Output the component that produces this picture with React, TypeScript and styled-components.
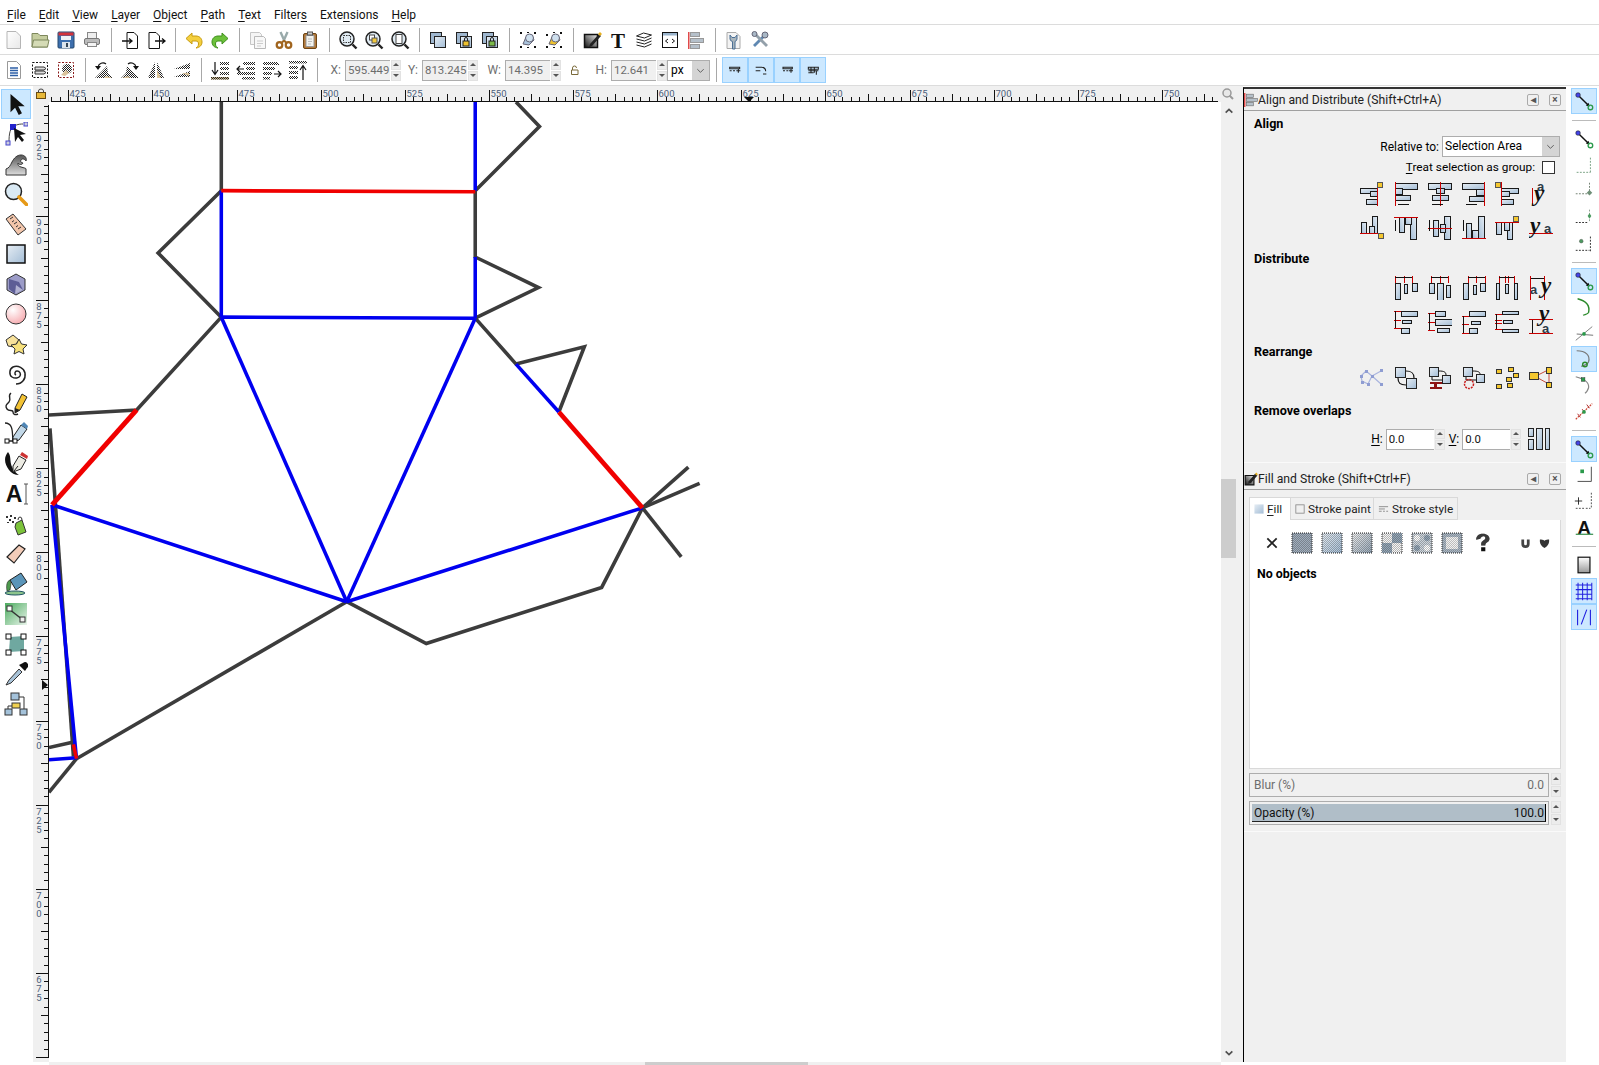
import React from 'react';
import styled, { createGlobalStyle } from 'styled-components';

const GlobalStyle = createGlobalStyle`
	html, body { margin: 0; padding: 0; background: #fff; }
	body { font-family: Roboto, "Open Sans", "Liberation Sans", sans-serif; font-size: 12px; color: #000; }
	u { text-underline-offset: 2px; }
`;

const Page = styled.div`
	width: 1599px;
	height: 1065px;
	overflow: hidden;
	display: flex;
	flex-direction: column;
	background: #fff;
`;

const MenuBar = styled.div`
	display: flex;
	align-items: center;
	gap: 13px;
	padding: 5px 0 0 7px;
	box-sizing: border-box;
	border-bottom: 1px solid #dcdcdc;
	flex: 0 0 25px;
`;

const MenuItem = styled.span`
	font-size: 12px;
	color: #111;
`;

const Toolbar = styled.div<{ $h: number }>`
	display: flex;
	align-items: center;
	flex: 0 0 ${(p) => p.$h}px;
	box-sizing: border-box;
	padding-left: 1px;
	border-bottom: 1px solid #dcdcdc;
`;

const ToolButton = styled.div<{ $active?: boolean }>`
	width: 26px;
	height: 26px;
	display: flex;
	align-items: center;
	justify-content: center;
	box-sizing: border-box;
	flex: 0 0 26px;
	background: ${(p) => (p.$active ? '#cce8ff' : 'transparent')};
	border: 1px solid ${(p) => (p.$active ? '#99d1ff' : 'transparent')};
`;

const VSep = styled.div`
	width: 12px;
	flex: 0 0 12px;
	height: 24px;
	display: flex;
	justify-content: center;
	&::after {
		content: '';
		width: 1px;
		background: #a8a8a8;
	}
`;

const Ico = styled.svg.attrs({ viewBox: '0 0 24 24' })<{ $s?: number }>`
	width: ${(p) => p.$s ?? 24}px;
	height: ${(p) => p.$s ?? 24}px;
	display: block;
	flex: none;
`;

const Defs = styled.svg`
	width: 0;
	height: 0;
	display: block;
	flex: 0 0 0;
`;

const CoordLabel = styled.span<{ $w: number }>`
	width: ${(p) => p.$w}px;
	flex: none;
	text-align: right;
	padding-right: 4px;
	box-sizing: border-box;
	color: #707070;
	font-size: 12px;
`;

const NumInput = styled.div<{ $w: number; $on?: boolean }>`
	width: ${(p) => p.$w}px;
	height: 21px;
	flex: none;
	box-sizing: border-box;
	border: 1px solid #adadad;
	border-width: 1px 0 1px 1px;
	background: ${(p) => (p.$on ? '#fff' : '#f0f0f0')};
	color: ${(p) => (p.$on ? '#111' : '#6d6d6d')};
	font-size: 11.4px;
	line-height: 19px;
	padding-left: 2px;
	overflow: hidden;
`;

const Spin = styled.div`
	width: 10px;
	height: 21px;
	flex: none;
	display: flex;
	flex-direction: column;
	gap: 1px;
	margin: 0 1px;
`;

const SpinPart = styled.div<{ $down?: boolean }>`
	flex: 1;
	background: #ececec;
	border: 1px solid #e2e2e2;
	box-sizing: border-box;
	display: flex;
	align-items: center;
	justify-content: center;
	&::after {
		content: '';
		border-left: 3px solid transparent;
		border-right: 3px solid transparent;
		${(p) => (p.$down ? 'border-top: 3px solid #555;' : 'border-bottom: 3px solid #555;')}
	}
`;

const UnitSelect = styled.div`
	width: 43px;
	height: 21px;
	flex: none;
	box-sizing: border-box;
	border: 1px solid #adadad;
	display: flex;
	font-size: 12px;
	line-height: 19px;
	padding-left: 3px;
	justify-content: space-between;
	margin-left: -1px;
`;

const SelectArrow = styled.div<{ $w: number }>`
	width: ${(p) => p.$w}px;
	background: #d4d4d4;
	display: flex;
	align-items: center;
	justify-content: center;
	flex: none;
`;

const Main = styled.div`
	flex: 1;
	display: flex;
	min-height: 0;
`;

const ToolBox = styled.div`
	width: 33px;
	flex: none;
	padding: 3px 0 0 1px;
	box-sizing: border-box;
	display: flex;
	flex-direction: column;
`;

const ToolSlot = styled.div<{ $active?: boolean }>`
	width: 30px;
	height: 30px;
	flex: none;
	box-sizing: border-box;
	display: flex;
	align-items: center;
	justify-content: center;
	background: ${(p) => (p.$active ? '#cce8ff' : 'transparent')};
	border: 1px solid ${(p) => (p.$active ? '#99d1ff' : 'transparent')};
`;

const CenterColumn = styled.div`
	width: 1210px;
	flex: none;
	display: flex;
	flex-direction: column;
`;

const TopRulerRow = styled.div`
	height: 16px;
	flex: none;
	display: flex;
	background: #f0f0f0;
`;

const RulerSvg = styled.svg`
	display: block;
	flex: none;
	text {
		font-family: Roboto, "Liberation Sans", sans-serif;
		font-size: 9.5px;
		fill: #4d5f7c;
	}
`;

const QuickZoom = styled.div`
	flex: 1;
	display: flex;
	padding-left: 1px;
	align-items: center;
`;

const CanvasRow = styled.div`
	flex: 1;
	display: flex;
	min-height: 0;
	background: #f0f0f0;
`;

const Canvas = styled.div`
	width: 1172px;
	flex: none;
	background: #fff;
	overflow: hidden;
`;

const Drawing = styled.svg`
	width: 1172px;
	height: 960px;
	display: block;
`;

const VScroll = styled.div`
	width: 15px;
	flex: none;
	display: flex;
	flex-direction: column;
`;

const Chevron = styled.div`
	height: 18px;
	flex: none;
	display: flex;
	align-items: center;
	justify-content: center;
`;

const Thumb = styled.div`
	height: 79px;
	flex: none;
	margin-top: 359px;
	margin-bottom: auto;
	background: #cdcdcd;
`;

const HScroll = styled.div`
	height: 3px;
	flex: none;
	margin-left: 49px;
	width: 1172px;
	background: #f0f0f0;
	display: flex;
`;

const HThumb = styled.div`
	width: 163px;
	margin-left: 596px;
	background: #cdcdcd;
`;

const Dock = styled.div`
	width: 323px;
	flex: none;
	box-sizing: border-box;
	background: #f0f0f0;
	border-left: 1px solid #000;
	border-top: 2px solid #333;
	display: flex;
	flex-direction: column;
	margin-top: 1px;
`;

const PanelTitle = styled.div`
	height: 22px;
	flex: none;
	box-sizing: border-box;
	display: flex;
	align-items: center;
	padding: 0 5px 0 0;
	border-bottom: 1px solid #a0a0a0;
	font-size: 12.2px;
	color: #222;
`;

const TitleText = styled.span`
	flex: 1;
`;

const TitleBtn = styled.div`
	width: 12px;
	height: 12px;
	box-sizing: border-box;
	border: 1px solid #aaa;
	border-radius: 2px;
	margin-left: 10px;
	display: flex;
	align-items: center;
	justify-content: center;
	font-size: 10px;
	font-weight: 700;
	line-height: 10px;
	color: #555;
`;

const SectionHead = styled.div<{ $mt?: number }>`
	height: 20px;
	line-height: 20px;
	margin-top: ${(p) => p.$mt ?? 0}px;
	padding-left: 10px;
	font-weight: 700;
	font-size: 12.6px;
	flex: none;
`;

const RightRow = styled.div<{ $h: number; $mt?: number; $pr: number }>`
	height: ${(p) => p.$h}px;
	margin-top: ${(p) => p.$mt ?? 0}px;
	padding-right: ${(p) => p.$pr}px;
	display: flex;
	align-items: center;
	justify-content: flex-end;
	flex: none;
`;

const Select = styled.div`
	width: 118px;
	height: 21px;
	margin-left: 3px;
	box-sizing: border-box;
	border: 1px solid #adadad;
	background: #fff;
	display: flex;
	justify-content: space-between;
	padding-left: 2px;
	line-height: 19px;
`;

const TreatLabel = styled.span`
	font-size: 11.8px;
`;

const CheckBox = styled.div`
	width: 13px;
	height: 13px;
	box-sizing: border-box;
	border: 1px solid #333;
	background: #fff;
	margin-left: 7px;
`;

const IconCell = styled.div`
	width: 33.8px;
	flex: none;
	display: flex;
	justify-content: center;
`;

const SmallLabel = styled.span`
	margin: 0 3px 0 3px;
`;

const PanelEnd = styled.div`
	flex: none;
	margin-top: 12px;
	height: 5px;
	border-top: 1px solid #fafafa;
`;

const Tabs = styled.div`
	display: flex;
	height: 23px;
	flex: none;
	margin: 7px 0 0 5px;
`;

const Tab = styled.div<{ $active?: boolean; $w: number }>`
	width: ${(p) => p.$w}px;
	box-sizing: border-box;
	display: flex;
	align-items: center;
	gap: 3px;
	padding-left: 4px;
	font-size: 11.8px;
	background: ${(p) => (p.$active ? '#fff' : '#f0f0f0')};
	border: 1px solid #d9d9d9;
	border-bottom: ${(p) => (p.$active ? 'none' : '1px solid #d9d9d9')};
	border-left: ${(p) => (p.$active ? '1px solid #d9d9d9' : 'none')};
	color: #222;
`;

const Notebook = styled.div`
	width: 312px;
	height: 249px;
	flex: none;
	margin-left: 5px;
	box-sizing: border-box;
	background: #fff;
	border: 1px solid #d9d9d9;
	border-top: none;
	padding: 12px 0 0 7px;
`;

const PaintRow = styled.div`
	display: flex;
	height: 22px;
	align-items: center;
`;

const PaintCell = styled.div<{ $ml?: number; $w?: number }>`
	width: ${(p) => p.$w ?? 30}px;
	margin-left: ${(p) => p.$ml ?? 0}px;
	display: flex;
	justify-content: center;
`;

const NoObjects = styled.div`
	margin-top: 10px;
	height: 20px;
	line-height: 20px;
	font-weight: 700;
	font-size: 12.4px;
`;

const SliderRow = styled.div<{ $mt: number }>`
	display: flex;
	margin: ${(p) => p.$mt}px 0 0 5px;
	flex: none;
	height: 24px;
`;

const Slider = styled.div<{ $on?: boolean }>`
	width: 300px;
	box-sizing: border-box;
	border: 1px solid #adadad;
	padding: ${(p) => (p.$on ? '2px' : '0 4px')};
	display: flex;
	color: ${(p) => (p.$on ? '#111' : '#6d6d6d')};
`;

const SliderFill = styled.div`
	flex: 1;
	background: #b0bec8;
	border-right: 1px solid #000;
	border-bottom: 1px solid #222;
	display: flex;
	justify-content: space-between;
	align-items: center;
	padding: 0 1px 0 2px;
`;

const SliderPlain = styled.div`
	flex: 1;
	display: flex;
	justify-content: space-between;
	align-items: center;
`;

const SliderSpin = styled(Spin)`
	height: 24px;
	margin-left: 2px;
`;

const DockFill = styled.div`
	flex: 1;
	margin-top: 6px;
	border-top: 1px solid #fafafa;
`;

const SnapBar = styled.div`
	flex: 1;
	display: flex;
	flex-direction: column;
	align-items: center;
	padding: 2px 3px 0 5px;
`;

const SnapSep = styled.div`
	width: 24px;
	height: 12px;
	flex: none;
	display: flex;
	align-items: center;
	&::after {
		content: '';
		width: 100%;
		height: 1px;
		background: #bbb;
	}
`;

const mnemonic = (s: string, i: number) => (
	<>
		{s.slice(0, i)}
		<u>{s[i]}</u>
		{s.slice(i + 1)}
	</>
);

const menus: [string, number][] = [
	['File', 0], ['Edit', 0], ['View', 0], ['Layer', 0], ['Object', 0], ['Path', 0],
	['Text', 0], ['Filters', 6], ['Extensions', 4], ['Help', 0],
];

const dim = 'url(#dt)';

const tb1: (React.ReactNode | null)[] = [
	<><path d="M5 3.500h9l4.500 4.500V20.500H5z" fill="url(#pp)" stroke="#b5b5b5" /></>,
	<><path d="M4 8V5.500h6l2 2h7.500V19H4z" fill="#c5cd9f" stroke="#7d875c" /><path d="M4 19l1.500-7H21l-1.500 7z" fill="#d5dbb6" stroke="#7d875c" /></>,
	<><rect x="4" y="4" width="16" height="16" rx="1" fill="#3d6fae" stroke="#24496f" /><rect x="4.500" y="4.500" width="15" height="3" fill="#d2323a" /><rect x="7" y="8" width="10" height="4" fill="#eef2f6" /><rect x="8" y="14" width="8" height="6" fill="#dce4ec" /><rect x="12" y="15" width="2" height="4" fill="#345" /></>,
	<><rect x="7.500" y="4.500" width="9" height="6" fill="#eee" stroke="#888" /><rect x="4.500" y="10.500" width="15" height="6" rx="1.500" fill="#bbb" stroke="#777" /><rect x="7.500" y="14.500" width="9" height="4" fill="#f4f4f4" stroke="#888" /></>,
	null,
	<><path d="M9 4.500h7l3.500 3.500V20.500H9z" fill="#fff" stroke="#111" /><path d="M4 13h10M11 10.500l3 2.500-3 2.500" fill="none" stroke="#111" strokeWidth="1.300" /></>,
	<><path d="M5 4.500h7l3.500 3.500V20.500H5z" fill="#fff" stroke="#111" /><path d="M11 13h10M18 10.500l3 2.500-3 2.500" fill="none" stroke="#111" strokeWidth="1.300" /></>,
	null,
	<><path d="M10 5L4 10.500 10 16v-3h4c2 0 2.500 1.500 2.500 3 0 2-1 3-2.500 4 4-.5 6-3 6-6 0-4-3-6-6-6h-4z" fill="#f4cf3e" stroke="#c79b10" /></>,
	<><path d="M14 5l6 5.500L14 16v-3h-4c-2 0-2.500 1.500-2.500 3 0 2 1 3 2.500 4-4-.5-6-3-6-6 0-4 3-6 6-6h4z" fill="#6cc13a" stroke="#3f8f1d" /></>,
	null,
	<><path d="M4.500 4.500h9l2 2v10h-11z" fill="#f5f5f5" stroke="#c6c6c6" /><path d="M8.500 8.500h9l2 2v10h-11z" fill="#f8f8f8" stroke="#b9b9b9" /><path d="M11 13h6M11 15.500h6M11 18h4" stroke="#ccc" /></>,
	<><path d="M8.500 4l4 9M15.500 4l-4 9" stroke="#9aa" strokeWidth="2.400" /><circle cx="7.500" cy="17" r="2.800" fill="none" stroke="#a0641d" strokeWidth="2.200" /><circle cx="16.500" cy="17" r="2.800" fill="none" stroke="#a0641d" strokeWidth="2.200" /><path d="M12 12.500l-3 3M12 12.500l3 3" stroke="#a0641d" strokeWidth="1.800" /></>,
	<><rect x="5.500" y="5.500" width="13" height="15" rx="1.500" fill="#b3793a" stroke="#6d4515" /><path d="M8 7.500h8v11H8z" fill="#f3f3ee" stroke="#999" /><rect x="9.500" y="4" width="5" height="3" fill="#ccc" stroke="#555" /><path d="M10 11h4M10 13.500h4M10 16h3" stroke="#bbb" /></>,
	null,
	<><circle cx="11" cy="11" r="7" fill="#dfeaf2" stroke="#222" strokeWidth="1.500" /><rect x="7.500" y="7.500" width="7" height="7" fill="none" stroke="#333" strokeDasharray="1.500 1" /><path d="M16.500 16.500l4 4" stroke="#222" strokeWidth="2.400" /></>,
	<><circle cx="11" cy="11" r="7" fill="#dfeaf2" stroke="#222" strokeWidth="1.500" /><rect x="7.500" y="7" width="5" height="5" fill="#fff" stroke="#444" /><rect x="10" y="10" width="5" height="5" fill="#f1c83c" stroke="#555" /><path d="M16.500 16.500l4 4" stroke="#222" strokeWidth="2.400" /></>,
	<><circle cx="11" cy="11" r="7" fill="#dfeaf2" stroke="#222" strokeWidth="1.500" /><rect x="8" y="6.500" width="6" height="9" fill="#fff" stroke="#444" /><path d="M16.500 16.500l4 4" stroke="#222" strokeWidth="2.400" /></>,
	null,
	<><rect x="4.500" y="4.500" width="11" height="11" fill="#9fb7cf" stroke="#222" /><rect x="8.500" y="8.500" width="11" height="11" fill="url(#gb)" stroke="#222" /></>,
	<><rect x="4.500" y="4.500" width="11" height="11" fill="#9fb7cf" stroke="#222" /><rect x="8.500" y="8.500" width="11" height="11" fill="url(#gb)" stroke="#222" /><rect x="11" y="13" width="6" height="5" fill="#efc22f" stroke="#222" /><path d="M12.500 13v-2a1.500 1.500 0 0 1 3 0v2" fill="none" stroke="#222" /></>,
	<><rect x="4.500" y="4.500" width="11" height="11" fill="#9fb7cf" stroke="#222" /><rect x="8.500" y="8.500" width="11" height="11" fill="url(#gb)" stroke="#222" /><rect x="11" y="13" width="6" height="5" fill="#7cba49" stroke="#222" /><path d="M12.500 13v-2a1.500 1.500 0 0 1 3 0v2" fill="none" stroke="#222" /></>,
	null,
	<><path d="M7 16l3-7 6-2 2 5-5 5z" fill="#a9c3dc" stroke="#667" /><circle cx="13.500" cy="10" r="4" fill="#cfe0ee" stroke="#667" /><path d="M4 4h2v2H4zM18 4h2v2h-2zM4 18h2v2H4zM18 18h2v2h-2zM11 4h2v1h-2zM11 19h2v1h-2z" fill="#111" /></>,
	<><path d="M7 16l3-7 6-2 2 5-5 5z" fill="#efc22f" stroke="#667" /><circle cx="13.500" cy="10" r="4" fill="#cfe0ee" stroke="#667" /><path d="M4 6h2v2H4zM18 4h2v2h-2zM4 18h2v2H4zM18 18h2v2h-2zM11 4h2v1h-2zM11 19h2v1h-2z" fill="#111" /></>,
	null,
	<><path d="M4.500 6.500h13v13h-13z" fill="url(#gk)" stroke="#111" strokeWidth="1.500" /><path d="M10 16l9-10 2 2-9 10-3 1z" fill="#222" /><path d="M18 6l2-2 2 2-2 2z" fill="#e6b020" /></>,
	<><text x="12" y="19.500" textAnchor="middle" fontFamily="Liberation Serif" fontWeight="700" fontSize="21" fill="#111">T</text></>,
	<><path d="M4.500 8l7-3 8 2-7 3z" fill="#fff" stroke="#222" /><path d="M4.500 11l8 2 7-3M4.500 14l8 2 7-3M4.500 17l8 2 7-3" fill="none" stroke="#222" /></>,
	<><rect x="4.500" y="4.500" width="15" height="15" fill="#fff" stroke="#111" /><rect x="5" y="5" width="14" height="2.500" fill="#9ab4cc" /><path d="M10 11l-2.500 2 2.500 2M14 11l2.500 2-2.500 2" fill="none" stroke="#111" /></>,
	<><rect x="4" y="4" width="1.500" height="17" fill="#e04a4a" /><rect x="6.500" y="4.500" width="9" height="4" fill="#b5c0ca" stroke="#999" /><rect x="6.500" y="10.500" width="13" height="4" fill="#b5c0ca" stroke="#999" /><rect x="6.500" y="16.500" width="9" height="4" fill="#b5c0ca" stroke="#999" /></>,
	null,
	<><path d="M5 4.500h9l4 4V20.500H5z" fill="#f3f3f3" stroke="#aaa" /><path d="M8 7v4a3 3 0 0 0 2.500 2.500V21h2.500V13.500A3 3 0 0 0 15 11V7l-2 2.500h-3z" fill="#a9b5bc" stroke="#4b6f95" /></>,
	<><path d="M6 18L16 8" stroke="#5f88b2" strokeWidth="2.800" /><path d="M7 6l12 12" stroke="#93a0aa" strokeWidth="2.800" /><circle cx="17" cy="7" r="3" fill="#a9b8c6" stroke="#667" /><circle cx="6.500" cy="6" r="2.500" fill="#a9b8c6" stroke="#667" /></>,
];

const tb2a: (React.ReactNode | null)[] = [
	<><path d="M5.500 3.500h9l4 4V20.500H5.500z" fill="#fff" stroke="#999" /><path d="M8 10h8M8 12.500h8M8 15h8M8 17.500h8" stroke="#2d5fa6" strokeWidth="1.300" /></>,
	<><rect x="4.500" y="4.500" width="15" height="15" fill="none" stroke="#111" strokeDasharray="2 1.500" /><path d="M7 9h9l2 1.500-2 1.500H7zM7 13h9l2 1.500-2 1.500H7z" fill="#ddd" stroke="#333" /></>,
	<><rect x="4.500" y="4.500" width="15" height="15" fill="none" stroke="#8a1a1a" strokeDasharray="2 1.500" /><circle cx="13" cy="11" r="5" fill={dim} /><path d="M7 17l5-5 3 3-4 3z" fill="#d9c29a" /></>,
	null,
	<><path d="M3 20h18l-5-5-1-7-4 4-3 3z" fill={dim} /><path d="M14 18l6 2h-8z" fill="#d9c29a" /><path d="M6 9a5 5 0 0 1 8-3" fill="none" stroke="#111" strokeWidth="1.200" /><path d="M3 8h6l-3 4z" fill="#111" /></>,
	<><path d="M21 20H3l5-5 1-7 4 4 3 3z" fill={dim} /><path d="M10 18l-6 2h8z" fill="#d9c29a" /><path d="M18 9a5 5 0 0 0-8-3" fill="none" stroke="#111" strokeWidth="1.200" /><path d="M21 8h-6l3 4z" fill="#111" /></>,
	<><path d="M11 4v16H4z" fill={dim} /><path d="M13 4v16h7z" fill={dim} /><path d="M13 12v8h4z" fill="#d9c29a" /></>,
	<><path d="M20 5v6H4z" fill={dim} /><path d="M20 13v6H4z" fill={dim} /><path d="M12 15l7 3v-3z" fill="#d9c29a" /></>,
	null,
	<><path d="M7 4v12M4 12l3 4.500L10 12" fill="none" stroke="#111" strokeWidth="1.200" /><path d="M12 4h9v3h-9zM12 9h9v3h-9zM12 14h9v3h-9z" fill={dim} /><path d="M3 19h18v2.500H3z" fill="#c9b58a" /><path d="M3 19h18v2.500H3z" fill={dim} /></>,
	<><path d="M3 11h7M6 8l-3 3 3 3" fill="none" stroke="#111" strokeWidth="1.200" /><path d="M9 4h12v3H9zM12 9h9v3h-9zM3 14h18v3H3zM8 19h13v2.500H8z" fill={dim} /></>,
	<><path d="M3 4h14l3 3H3zM3 9h12v3H3zM3 14h9v3H3zM3 19h7v2.500H3z" fill={dim} /><path d="M14 16h7M18 13l3 3-3 3" fill="none" stroke="#111" strokeWidth="1.200" /></>,
	<><path d="M17 8v14M14 12l3-4.500 3 4.500" fill="none" stroke="#111" strokeWidth="1.200" /><path d="M3 3h18v2.500H3zM3 8h9v3H3zM3 13h9v3H3zM3 18h9v3H3z" fill={dim} /></>,
];

const toggles = [
	'M4 8h15v2H4zM4 13h3M9 13h3M14 13h6M17 10v6',
	'M4 8h9c4 0 6 2 6 6M4 13h7M15 18h5',
	'M6 8h14v2H6zM6 13h3M11 13h3M15 13h6M18 10v6',
	'M5 8h15v3H5zM5 13h15M5 16h8M9 8v8M14 8v8M17 13v6',
];

const tools: React.ReactNode[] = [
	<><path d="M6 1v20l5-5 4 8 3.500-2-4-7.500h7z" fill="#111" /></>,
	<><path d="M5 20C5 12 6 6 10 4s7-2 9-2" fill="none" stroke="#444" /><rect x="6" y="2" width="6" height="6" fill="#2222cc" /><rect x="20" y="0" width="4" height="4" fill="#ccd" stroke="#44c" /><rect x="2" y="19" width="4" height="4" fill="#ccd" stroke="#44c" /><path d="M10 6l1 14 3-5 4 5 2-2-4-5 6-1z" fill="#111" /></>,
	<><path d="M2 23v-6c3-1 4-3 6-7s5-7 9-7c4 0 6 3 5 6-1-2-4-3-5-1-1 1 0 3 2 3-1 2-4 2-5 0 0 2 0 3 3 4s5 1 5 2v6z" fill="url(#gg)" stroke="#333" /></>,
	<><circle cx="9.500" cy="9.500" r="8" fill="#d9e9f4" stroke="#222" strokeWidth="1.500" /><path d="M15 15l7.500 7.500" stroke="#e69a18" strokeWidth="3.600" strokeLinecap="round" /></>,
	<><path d="M2 7l7-5 13 15-8 6z" fill="#f3c6ab" stroke="#333" /><path d="M6 7l3-2M8 10l2-1.500M10 12l3-2M12 15l2-1.500M14 17l3-2" stroke="#333" /></>,
	<><rect x="3" y="3" width="18" height="18" fill="url(#gb)" stroke="#111" strokeWidth="1.500" /></>,
	<><path d="M12 2l9 5v11l-9 5-9-5V7z" fill="#9c9cc8" stroke="#333" /><path d="M5 7l10 3 4 8-8 4-6-5z" fill="#5d5d96" /><path d="M12 13l7 5-8 4z" fill="#b3b3d3" /></>,
	<><circle cx="12" cy="12" r="10" fill="url(#gp)" stroke="#333" /></>,
	<><path d="M2 8l7-5 6 5-5 7-6-1z" fill="#f7e19a" stroke="#333" /><path d="M15 7l2.500 5 5.500 1-4 4 1 5-5-2.500L10 22l1-5-4-4 5.500-1z" fill="#f7e17c" stroke="#333" /></>,
	<><path d="M12 13c-2-1-1-4 1-4 3 0 4 3 3 5s-5 3-8 1-3-8 1-10c5-2 11 1 12 6 1 6-3 11-9 11" fill="none" stroke="#222" strokeWidth="1.500" /></>,
	<><path d="M7 1C3 4 8 7 5 10s-4 4-2 7c2 3 6 0 6 3s3 3 5 2" fill="none" stroke="#222" strokeWidth="1.400" /><path d="M11 16L18 2l5 3-7 13-5 3z" fill="#f2c233" stroke="#222" /><path d="M11 16l5 2-5 3z" fill="#222" /></>,
	<><path d="M1 1c9 0 7 11 8 18H3" fill="none" stroke="#222" strokeWidth="1.300" /><path d="M9 15L17 3l6 4-8 11-6 2z" fill="#c2d8e8" stroke="#222" /><path d="M17 3l6 4 1-3-4-4z" fill="#4f86b6" /><rect x="1" y="17" width="4" height="4" fill="#fff" stroke="#111" /><rect x="9" y="17" width="4" height="4" fill="#fff" stroke="#111" /></>,
	<><path d="M4 0C-1 6 1 13 5 18c2 3 6 5 10 5-3-2-7-6-8-11S7 4 4 0z" fill="#111" /><path d="M9 14L15 4l7 4-5 9-8 3z" fill="#ecebe3" stroke="#222" /><path d="M16 3l7 4 1-3-6-4z" fill="#c33" /><path d="M10 19l4-5" stroke="#222" /></>,
	<><text x="10" y="20" textAnchor="middle" fontFamily="Liberation Sans" fontWeight="700" fontSize="23" fill="#111">A</text><path d="M22 2v20M20 2h4M20 22h4" stroke="#555" /></>,
	<><path d="M12 11l6-3 4 12-8 3-3-8z" fill="#7cc33a" stroke="#333" /><path d="M14 8a2 3 0 0 1 4 0" fill="none" stroke="#333" /><path d="M2 4h2v2H2zM6 3h2v2H6zM10 5h2v2h-2zM5 7h2v2H5zM8 9h2v2H8zM3 10h2v1H3z" fill="#333" /></>,
	<><path d="M3 15L15 3l6 4-11 14z" fill="#f4cdb9" stroke="#222" strokeWidth="1.200" /></>,
	<><ellipse cx="11" cy="21" rx="10" ry="2" fill="#8cc48c" stroke="#256" /><path d="M6 8l11-7 6 9-11 8z" fill="#5b95b9" stroke="#222" /><path d="M6 8c-3 1-4 5-3 11l3-1 1-6z" fill="#4d9a4d" stroke="#222" strokeWidth=".6" /></>,
	<><rect x="1" y="1" width="22" height="22" fill="url(#gm)" /><path d="M5 7l14 11" stroke="#333" strokeWidth="1.500" /><rect x="3" y="4" width="5" height="5" fill="#fff" stroke="#333" /><rect x="16" y="15" width="5" height="5" fill="#eee" stroke="#333" /></>,
	<><path d="M6 5l14-1 0 15-15 1z" fill="#6fa8a0" /><rect x="2" y="2" width="5" height="5" fill="#fff" stroke="#111" /><rect x="17" y="2" width="5" height="5" fill="#fff" stroke="#111" /><rect x="2" y="18" width="5" height="5" fill="#fff" stroke="#111" /><rect x="17" y="18" width="5" height="5" fill="#fff" stroke="#111" /></>,
	<><path d="M15 7L5 18l-3 5 5-2L18 10z" fill="#a9c3d8" stroke="#333" /><path d="M15 3l6 6 2-3a3 3 0 0 0-4-5z" fill="#111" /></>,
	<><rect x="7" y="1" width="8" height="7" fill="#a4c2da" stroke="#333" /><rect x="8" y="11" width="8" height="5" fill="#f0d050" stroke="#333" /><rect x="1" y="17" width="7" height="6" fill="#a4c2da" stroke="#333" /><rect x="16" y="17" width="7" height="6" fill="#a4c2da" stroke="#333" /><path d="M15 5h5v12M4 17v-3h4" fill="none" stroke="#333" /></>,
];

type Bar = [number, number, number, number];

interface AlignDef {
	bars: Bar[];
	reds: number[];
	yellow?: [number, number];
	arrow?: boolean;
	tf?: string;
	top?: number;
}

const BarIcon = ({ d }: { d: AlignDef }) => (
	<Ico shapeRendering="crispEdges">
		<g transform={d.tf}>
			{d.bars.map((b, i) => (
				<rect key={i} x={b[0] + 0.5} y={b[1] + 0.5} width={b[2]} height={b[3]} fill="url(#gb)" stroke="#1a1a1a" />
			))}
			{d.reds.map((x, i) => (
				<rect key={i} x={x} y={d.top ?? 0} width="1" height={d.top !== undefined ? 7 : 24} fill="#c80000" />
			))}
			{d.top !== undefined && <rect x={d.reds[0]} y={1} width={d.reds[d.reds.length - 1] - d.reds[0]} height="1" fill="#111" />}
			{d.yellow && <rect x={d.yellow[0] + 0.5} y={d.yellow[1] + 0.5} width="5" height="5" fill="#f4c72f" stroke="#555" />}
			{d.arrow && <rect x="4" y="22" width="11" height="1" fill="#111" />}
		</g>
	</Ico>
);

const rot = 'rotate(90 12 12)';
const swap = 'matrix(0 1 1 0 0 0)';

const Letter = ({ k, x, y }: { k: 'a' | 'y'; x: number; y: number }) =>
	k === 'a' ? (
		<text x={x} y={y} fontFamily="Liberation Sans" fontWeight="700" fontSize="13" fill="#2d3b48">a</text>
	) : (
		<text x={x} y={y} fontFamily="Liberation Serif" fontWeight="700" fontStyle="italic" fontSize="23" fill="#111">y</text>
	);

const glyphLayouts = {
	alignV: (
		<>
			<rect x="3" y="6" width="1" height="18" fill="#c80000" />
			<Letter k="a" x={8} y={9} />
			<Letter k="y" x={5} y={19} />
		</>
	),
	alignH: (
		<>
			<rect x="0" y="17" width="24" height="1" fill="#c80000" />
			<Letter k="y" x={1} y={17} />
			<Letter k="a" x={15} y={17} />
		</>
	),
	distV: (
		<>
			<rect x="1" y="0" width="1" height="24" fill="#c80000" />
			<rect x="15" y="0" width="1" height="24" fill="#c80000" />
			<rect x="2" y="2" width="13" height="1" fill="#111" />
			<Letter k="a" x={1} y={18} />
			<Letter k="y" x={12} y={17} />
		</>
	),
	distH: (
		<>
			<rect x="0" y="9" width="24" height="1" fill="#c80000" />
			<rect x="0" y="23" width="24" height="1" fill="#c80000" />
			<rect x="3" y="10" width="1" height="13" fill="#111" />
			<Letter k="y" x={10} y={11} />
			<Letter k="a" x={13} y={23} />
		</>
	),
};

const alignRow1: AlignDef[] = [
	{ bars: [[0, 6, 17, 5], [10, 9, 7, 5], [6, 17, 11, 5]], reds: [17], yellow: [17, 0] },
	{ bars: [[1, 1, 22, 6], [1, 6, 7, 6], [1, 13, 15, 5]], reds: [1], arrow: true },
	{ bars: [[0, 1, 23, 6], [8, 6, 8, 5], [4, 13, 16, 5]], reds: [12], arrow: true },
	{ bars: [[0, 1, 22, 6], [14, 7, 8, 6], [7, 14, 15, 5]], reds: [22], arrow: true },
	{ bars: [[6, 6, 17, 5], [6, 9, 8, 5], [6, 17, 12, 5]], reds: [6], yellow: [0, 0] },
];

const distRow: AlignDef[] = [
	{ bars: [[1, 7, 5, 16], [10, 8, 3, 9], [18, 7, 5, 8]], reds: [1, 10, 18], top: 0 },
	{ bars: [[1, 7, 5, 10], [9, 7, 6, 17], [18, 9, 4, 12]], reds: [3, 12, 20], top: 0 },
	{ bars: [[1, 7, 5, 16], [11, 9, 3, 9], [18, 7, 5, 8]], reds: [6, 14, 23], top: 0 },
	{ bars: [[1, 7, 3, 16], [10, 8, 3, 9], [19, 7, 3, 16]], reds: [4, 10, 13, 19], top: 0 },
];

const rearrange: React.ReactNode[] = [
	<><path d="M1 10l5-5 6 5-4 8-6-3zM12 10l9-5M12 10l9 8" fill="none" stroke="#a9b4de" strokeWidth="1.200" /><path d="M0 9h3v3H0zM5 4h3v3H5zM11 9h3v3h-3zM7 17h3v3H7zM1 15h3v3H1zM20 3h3v3h-3zM20 17h3v3h-3z" fill="#8f9dd2" /></>,
	<><rect x="1.500" y="1.500" width="10" height="10" fill="url(#gb)" stroke="#222" /><rect x="12.500" y="12.500" width="10" height="10" fill="url(#gb)" stroke="#222" /><path d="M12 5c6 0 8 2 8 7M12 19c-6 0-8-2-8-7" fill="none" stroke="#111" strokeWidth="1.200" /></>,
	<><rect x="1.500" y="1.500" width="9" height="9" fill="url(#gb)" stroke="#222" /><rect x="14.500" y="9.500" width="8" height="8" fill="url(#gb)" stroke="#222" /><path d="M11 5c5 0 7 1 7 4M4 11v3h10" fill="none" stroke="#111" /><path d="M2 16h12v2H2zM2 21h12v2H2zM6 18h3v3H6z" fill="#8d1212" /></>,
	<><rect x="1.500" y="1.500" width="9" height="9" fill="url(#gb)" stroke="#222" /><rect x="14.500" y="8.500" width="8" height="8" fill="url(#gb)" stroke="#222" /><path d="M11 5c5 0 7 1 7 3M4 11v3h10" fill="none" stroke="#111" /><circle cx="7" cy="18" r="4.500" fill="none" stroke="#c81c1c" strokeWidth="1.500" strokeDasharray="2 1" /></>,
	<><g fill="#f4c72f" stroke="#333"><rect x="1.500" y="3.500" width="5" height="4" /><rect x="13.500" y="1.500" width="5" height="4" /><rect x="18.500" y="7.500" width="5" height="4" /><rect x="11.500" y="11.500" width="5" height="4" /><rect x="1.500" y="18.500" width="5" height="4" /><rect x="12.500" y="17.500" width="5" height="4" /></g></>,
	<><path d="M9 9l10-5M9 12l9 5M20 8v8" stroke="#c84a3a" /><rect x="0.500" y="6.500" width="9" height="7" fill="#f4c72f" stroke="#333" /><rect x="17.500" y="1.500" width="5" height="6" fill="#f4c72f" stroke="#333" /><rect x="17.500" y="16.500" width="5" height="5" fill="#f4c72f" stroke="#333" /></>,
];

const swatch = { x: 2, y: 2, width: 20, height: 20 };

const paints: React.ReactNode[] = [
	<><rect {...swatch} fill="#9fadbc" stroke="#222" strokeDasharray="1 1" /><rect {...swatch} fill={dim} opacity="0.3" /></>,
	<><rect {...swatch} fill="url(#gb)" stroke="#222" strokeDasharray="1 1" /><rect {...swatch} fill={dim} opacity="0.3" /></>,
	<><rect {...swatch} fill="url(#gl)" stroke="#222" strokeDasharray="1 1" /><rect {...swatch} fill={dim} opacity="0.3" /></>,
	<><rect {...swatch} fill="#f4f4f4" stroke="#222" strokeDasharray="1 1" /><path d="M12 2h10v10H12zM2 12h10v10H2z" fill="#93a5b6" /><rect {...swatch} fill={dim} opacity="0.3" /></>,
	<><rect {...swatch} fill="#ccd4dc" stroke="#222" strokeDasharray="1 1" /><circle cx="7" cy="7" r="3" fill="#fff" /><circle cx="17" cy="7" r="3" fill="#93a5b6" /><circle cx="7" cy="17" r="3" fill="#93a5b6" /><circle cx="17" cy="17" r="3" fill="#fff" /><rect {...swatch} fill={dim} opacity="0.3" /></>,
	<><rect {...swatch} fill="#a9b6c3" stroke="#222" strokeDasharray="1 1" /><rect x="6" y="6" width="12" height="12" fill="#f0f0f0" /><rect {...swatch} fill={dim} opacity="0.25" /></>,
];

const connector = (
	<>
		<path d="M7 7l10 10" stroke="#111" strokeWidth="1.600" />
		<path d="M18 18l-4-1 3-3z" fill="#111" />
		<circle cx="5.500" cy="5.500" r="2.500" fill="#4444e8" stroke="#111" strokeWidth=".6" />
		<circle cx="19" cy="19" r="2.500" fill="none" stroke="#2b9a4b" strokeWidth="1.500" />
	</>
);

const snaps: (React.ReactNode | null | { on: React.ReactNode })[] = [
	{ on: connector },
	null,
	connector,
	<><path d="M4 20h15M19 20V4" fill="none" stroke="#6f9a7a" strokeDasharray="2 1.500" /></>,
	<><path d="M3 15h14M18 3v13" fill="none" stroke="#6a7a6a" strokeDasharray="2 1.500" /><path d="M18 11l3 3-3 3-3-3z" fill="#6f8f77" /></>,
	<><path d="M3 18h14" stroke="#222" strokeDasharray="2 1.500" /><path d="M18 4v14" stroke="#8a9a8a" strokeDasharray="2 1.500" /><path d="M18 8l2 3-2 3-2-3z" fill="#4b9a5f" /></>,
	<><path d="M3 20h15M19 5v16" fill="none" stroke="#222" strokeDasharray="2 1.500" /><circle cx="9" cy="10" r="2" fill="#4b9a5f" stroke="#555" strokeWidth=".5" /></>,
	null,
	{ on: connector },
	<><path d="M5 3c8 2 14 6 12 15-1 2-4 2-6 3" fill="none" stroke="#2b8a2b" strokeWidth="1.500" /></>,
	<><path d="M3 20L21 5" stroke="#777" /><path d="M4 11l17 6" stroke="#777" transform="rotate(-15 12 12)" /><circle cx="12" cy="13" r="2" fill="#2b9a4b" /></>,
	{ on: <><path d="M4 3c10 0 15 5 13 12-1 3-4 4-8 5" fill="none" stroke="#777" strokeWidth="1.300" /><circle cx="13" cy="18" r="2.500" fill="none" stroke="#2b8a2b" strokeWidth="1.500" /></> },
	<><path d="M3 3c8 2 15 5 14 12-1 3-2 5-4 6" fill="none" stroke="#888" strokeWidth="1.300" /><rect x="9" y="4" width="4" height="4" fill="#2b9a4b" stroke="#333" strokeWidth=".5" /></>,
	<><path d="M3 21L21 4" stroke="#c43" strokeWidth="1.300" strokeDasharray="2 1" /><path d="M5 15l3 4M10 10l3 4M15 5l3 4" stroke="#a22" /><circle cx="12" cy="13" r="2" fill="#2b9a4b" /></>,
	null,
	{ on: connector },
	<><path d="M5 19h15M20 3v16" fill="none" stroke="#444" /><rect x="8" y="6" width="4" height="4" fill="#2b9a4b" /></>,
	<><path d="M6 8v8M2 12h8" stroke="#222" /><path d="M14 20h5M20 3v17" fill="none" stroke="#444" strokeDasharray="2 1.500" /><path d="M3 20h9" stroke="#444" strokeDasharray="2 1.500" /></>,
	<><text x="12" y="20" textAnchor="middle" fontFamily="Liberation Sans" fontWeight="700" fontSize="20" fill="#111">A</text><path d="M3 20h19" stroke="#4b9a5f" strokeWidth="1.500" /></>,
	null,
	<><rect x="5.500" y="3.500" width="13" height="17" fill="url(#gk2)" stroke="#111" strokeWidth="1.300" /></>,
	{ on: <path d="M3 5.500h18M3 10.500h18M3 15.500h18M3 20.500h18M5.500 3v19M10.500 3v19M15.500 3v19M20.500 3v19" stroke="#2020e0" strokeWidth="1.100" fill="none" /> },
	{ on: <path d="M5 4v17M19 4v17M9 20l6-16" stroke="#2020e0" strokeWidth="1.200" fill="none" /> },
];

const TopRuler = () => {
	const ticks: React.ReactNode[] = [];
	const labels: React.ReactNode[] = [];
	for (let i = -2; i < 140; i++) {
		const x = Math.round(35.3 + 8.413 * i) + 0.5;
		const len = i % 10 === 0 ? 11 : i % 5 === 0 ? 7 : 4;
		if (x < 18 || x > 1185) continue;
		ticks.push(<path key={i} d={`M${x} 15V${15 - len}`} stroke="#111" />);
		if (i % 10 === 0) {
			labels.push(<text key={i} x={x + 1} y={11}>{425 + (i / 10) * 25}</text>);
		}
	}
	return (
		<RulerSvg width="1188" height="16">
			<path d="M18 15.500H1185" stroke="#111" />
			{ticks}
			{labels}
			<g transform="translate(3 3)">
				<rect x="0.500" y="3.500" width="9" height="6" fill="#e8b838" stroke="#6a4c10" />
				<path d="M2.500 3.500V2a2.500 2 0 0 1 5 0v1.500" fill="none" stroke="#444" />
			</g>
			<path d="M711 11h10l-5 5z" fill="#111" />
		</RulerSvg>
	);
};

const SideRuler = () => {
	const items: React.ReactNode[] = [];
	for (let i = -3; i < 114; i++) {
		const y = Math.round(29.7 + 8.413 * i) + 0.5;
		if (y < 3) continue;
		const len = i % 10 === 0 ? 12 : i % 5 === 0 ? 7 : 4;
		items.push(<path key={i} d={`M15 ${y}H${15 - len}`} stroke="#111" />);
		if (i % 10 === 0 && i <= 100) {
			const v = String(925 - (i / 10) * 25);
			items.push(
				<text key={`l${i}`} x="6" y={y + 9} textAnchor="middle">
					{v.split('').map((c, k) => (
						<tspan key={k} x="6" dy={k ? 9 : 0}>{c}</tspan>
					))}
				</text>,
			);
		}
	}
	return (
		<RulerSvg width="16" height="960">
			<path d="M15.500 3V956" stroke="#111" />
			{items}
			<path d="M9 578l6 5-6 5z" fill="#111" />
		</RulerSvg>
	);
};

const seg = (pts: number[][]) => pts.map((p) => p.join(',')).join(' ');

const darkLines = [
	[[217, 100], [217, 187]],
	[[506, 100], [529, 124], [466, 187]],
	[[217, 187], [155, 248], [217, 311]],
	[[466, 187], [466, 252], [528, 282], [466, 312]],
	[[217, 311], [134, 402], [48, 407]],
	[[466, 312], [506, 357], [573, 340], [548, 404]],
	[[630, 498], [675, 458]],
	[[630, 498], [686, 474]],
	[[630, 498], [668, 546]],
	[[630, 498], [590, 576], [418, 631], [340, 590]],
	[[340, 590], [75, 744]],
	[[49, 420], [72, 742]],
	[[75, 744], [48, 777]],
	[[48, 733], [70, 728]],
];

const blueLines = [
	[[466, 100], [466, 187]],
	[[217, 187], [217, 311]],
	[[466, 252], [466, 312]],
	[[217, 311], [466, 312]],
	[[217, 311], [340, 590]],
	[[466, 312], [340, 590]],
	[[51, 495], [340, 590]],
	[[340, 590], [630, 498]],
	[[506, 357], [548, 404]],
	[[51, 495], [75, 744]],
	[[48, 745], [75, 743]],
];

const redLines: [number[][], number][] = [
	[[[217, 187], [466, 188]], 3.600],
	[[[134, 402], [51, 495]], 4.800],
	[[[548, 404], [630, 498]], 4.600],
	[[[72, 730], [75, 744]], 3.400],
];

const chevronDown = <Ico $s={11}><path d="M5 9l7 7 7-7" fill="none" stroke="#555" strokeWidth="2" /></Ico>;

const App = () => (
	<Page>
		<GlobalStyle />
		<Defs>
			<defs>
				<linearGradient id="gb" x1="0" y1="0" x2="1" y2="1"><stop offset="0" stopColor="#e6edf4" /><stop offset="1" stopColor="#a3bdd6" /></linearGradient>
				<linearGradient id="pp" x1="0" y1="0" x2="1" y2="1"><stop offset="0" stopColor="#fff" /><stop offset="1" stopColor="#e8e8e8" /></linearGradient>
				<linearGradient id="gg" x1="0" y1="0" x2="0" y2="1"><stop offset="0" stopColor="#555" /><stop offset="1" stopColor="#ddd" /></linearGradient>
				<linearGradient id="gk" x1="0" y1="1" x2="1" y2="0"><stop offset="0" stopColor="#111" /><stop offset="1" stopColor="#eee" /></linearGradient>
				<linearGradient id="gk2" x1="0" y1="0" x2="0" y2="1"><stop offset="0" stopColor="#fff" /><stop offset="1" stopColor="#999" /></linearGradient>
				<linearGradient id="gl" x1="0" y1="0" x2="1" y2="1"><stop offset="0" stopColor="#f2f2f2" /><stop offset="1" stopColor="#93a5b6" /></linearGradient>
				<linearGradient id="gm" x1="0" y1="0" x2="1" y2="1"><stop offset="0" stopColor="#4cab5f" /><stop offset="1" stopColor="#eaf5ec" /></linearGradient>
				<radialGradient id="gp" cx=".35" cy=".3" r=".9"><stop offset="0" stopColor="#fff" /><stop offset="1" stopColor="#f59aa0" /></radialGradient>
				<pattern id="dt" width="2" height="2" patternUnits="userSpaceOnUse"><rect width="1" height="1" fill="#222" /><rect x="1" y="1" width="1" height="1" fill="#222" /></pattern>
			</defs>
		</Defs>
		<MenuBar>
			{menus.map(([m, i]) => (
				<MenuItem key={m}>{mnemonic(m, i)}</MenuItem>
			))}
		</MenuBar>
		<Toolbar $h={30}>
			{tb1.map((n, i) => (n ? <ToolButton key={i}><Ico>{n}</Ico></ToolButton> : <VSep key={i} />))}
		</Toolbar>
		<Toolbar $h={31}>
			{tb2a.map((n, i) => (n ? <ToolButton key={i}><Ico>{n}</Ico></ToolButton> : <VSep key={i} />))}
			<VSep />
			<CoordLabel $w={22}>X:</CoordLabel>
			<NumInput $w={45}>595.449</NumInput>
			<Spin><SpinPart /><SpinPart $down /></Spin>
			<CoordLabel $w={20}>Y:</CoordLabel>
			<NumInput $w={45}>813.245</NumInput>
			<Spin><SpinPart /><SpinPart $down /></Spin>
			<CoordLabel $w={26}>W:</CoordLabel>
			<NumInput $w={45}>14.395</NumInput>
			<Spin><SpinPart /><SpinPart $down /></Spin>
			<ToolButton>
				<Ico $s={12}><path d="M7 12V8a4 4 0 0 1 8 0M5 12h13v9H5z" fill="none" stroke="#7a6a3a" strokeWidth="2" /></Ico>
			</ToolButton>
			<CoordLabel $w={23}>H:</CoordLabel>
			<NumInput $w={45}>12.641</NumInput>
			<Spin><SpinPart /><SpinPart $down /></Spin>
			<UnitSelect>
				px
				<SelectArrow $w={17}>{chevronDown}</SelectArrow>
			</UnitSelect>
			<VSep />
			{toggles.map((d) => (
				<ToolButton key={d} $active><Ico $s={16}><path d={d} fill="none" stroke="#222" strokeWidth="1.600" /></Ico></ToolButton>
			))}
		</Toolbar>
		<Main>
			<ToolBox>
				{tools.map((n, i) => (
					<ToolSlot key={i} $active={i === 0}><Ico $s={i === 0 ? 22 : 24}>{n}</Ico></ToolSlot>
				))}
			</ToolBox>
			<CenterColumn>
				<TopRulerRow>
					<TopRuler />
					<QuickZoom>
						<Ico $s={12}><circle cx="10" cy="10" r="8" fill="#e8e8e8" stroke="#999" strokeWidth="3" /><path d="M15 15l7 7" stroke="#999" strokeWidth="4" /></Ico>
					</QuickZoom>
				</TopRulerRow>
				<CanvasRow>
					<SideRuler />
					<Canvas>
						<Drawing viewBox="0 0 1172 960">
							<g transform="translate(-49 -102) scale(1.0198)" fill="none" strokeLinejoin="miter">
								{darkLines.map((l, i) => (
									<polyline key={i} points={seg(l)} stroke="#3c3c3c" strokeWidth="3.500" />
								))}
								{blueLines.map((l, i) => (
									<polyline key={i} points={seg(l)} stroke="#0000f0" strokeWidth="3.500" />
								))}
								{redLines.map(([l, w], i) => (
									<polyline key={i} points={seg(l)} stroke="#f00000" strokeWidth={w} />
								))}
							</g>
						</Drawing>
					</Canvas>
					<VScroll>
						<Chevron><Ico $s={10}><path d="M4 16l8-8 8 8" fill="none" stroke="#505050" strokeWidth="4" /></Ico></Chevron>
						<Thumb />
						<Chevron><Ico $s={10}><path d="M4 8l8 8 8-8" fill="none" stroke="#505050" strokeWidth="4" /></Ico></Chevron>
					</VScroll>
				</CanvasRow>
			</CenterColumn>
			<Dock>
				<PanelTitle>
					<Ico $s={14}><rect x="0" y="0" width="2.500" height="24" fill="#e04a4a" /><rect x="4" y="2" width="12" height="6" fill="#b5c0ca" stroke="#666" /><rect x="4" y="9.500" width="19" height="5" fill="#b5c0ca" stroke="#666" /><rect x="4" y="16" width="12" height="6" fill="#b5c0ca" stroke="#666" /></Ico>
					<TitleText>Align and Distribute (Shift+Ctrl+A)</TitleText>
					<TitleBtn>◂</TitleBtn>
					<TitleBtn>×</TitleBtn>
				</PanelTitle>
				<SectionHead $mt={3}>Align</SectionHead>
				<RightRow $h={21} $mt={2} $pr={6}>
					Relative to:
					<Select>
						Selection Area
						<SelectArrow $w={17}>{chevronDown}</SelectArrow>
					</Select>
				</RightRow>
				<RightRow $h={20} $pr={11}>
					<TreatLabel>{mnemonic('Treat selection as group:', 0)}</TreatLabel>
					<CheckBox />
				</RightRow>
				<RightRow $h={34} $pr={8}>
					{alignRow1.map((d, i) => <IconCell key={i}><BarIcon d={d} /></IconCell>)}
					<IconCell><Ico>{glyphLayouts.alignV}</Ico></IconCell>
				</RightRow>
				<RightRow $h={34} $pr={8}>
					{alignRow1.map((d, i) => <IconCell key={i}><BarIcon d={{ ...d, tf: rot }} /></IconCell>)}
					<IconCell><Ico>{glyphLayouts.alignH}</Ico></IconCell>
				</RightRow>
				<SectionHead $mt={4}>Distribute</SectionHead>
				<RightRow $h={34} $mt={2} $pr={8}>
					{distRow.map((d, i) => <IconCell key={i}><BarIcon d={d} /></IconCell>)}
					<IconCell><Ico>{glyphLayouts.distV}</Ico></IconCell>
				</RightRow>
				<RightRow $h={34} $pr={8}>
					{distRow.map((d, i) => <IconCell key={i}><BarIcon d={{ ...d, tf: swap }} /></IconCell>)}
					<IconCell><Ico>{glyphLayouts.distH}</Ico></IconCell>
				</RightRow>
				<SectionHead $mt={3}>Rearrange</SectionHead>
				<RightRow $h={32} $pr={8}>
					{rearrange.map((n, i) => <IconCell key={i}><Ico>{n}</Ico></IconCell>)}
				</RightRow>
				<SectionHead $mt={7}>Remove overlaps</SectionHead>
				<RightRow $h={22} $mt={7} $pr={10}>
					<SmallLabel>{mnemonic('H:', 0)}</SmallLabel>
					<NumInput $w={48} $on>0.0</NumInput>
					<Spin><SpinPart /><SpinPart $down /></Spin>
					<SmallLabel>{mnemonic('V:', 0)}</SmallLabel>
					<NumInput $w={48} $on>0.0</NumInput>
					<Spin><SpinPart /><SpinPart $down /></Spin>
					<IconCell>
						<Ico shapeRendering="crispEdges">
							<rect x="1.500" y="1.500" width="5" height="8" fill="url(#gb)" stroke="#222" />
							<rect x="1.500" y="12.500" width="5" height="10" fill="url(#gb)" stroke="#222" />
							<rect x="9.500" y="1.500" width="6" height="21" fill="url(#gb)" stroke="#222" />
							<rect x="18.500" y="1.500" width="4" height="21" fill="url(#gb)" stroke="#222" />
						</Ico>
					</IconCell>
				</RightRow>
				<PanelEnd />
				<PanelTitle>
					<Ico $s={14}><path d="M2 6h15v16H2z" fill="url(#gk)" stroke="#111" strokeWidth="2" /><path d="M8 16L19 3l4 3-11 13-5 1z" fill="#222" /><path d="M19 3l2-2 3 3-3 2z" fill="#e6b020" /></Ico>
					<TitleText>Fill and Stroke (Shift+Ctrl+F)</TitleText>
					<TitleBtn>◂</TitleBtn>
					<TitleBtn>×</TitleBtn>
				</PanelTitle>
				<Tabs>
					<Tab $active $w={42}>
						<Ico $s={10}><rect x="1" y="1" width="22" height="22" fill="url(#gb)" /></Ico>
						<span>{mnemonic('Fill', 0)}</span>
					</Tab>
					<Tab $w={83}>
						<Ico $s={10}><rect x="2" y="2" width="20" height="20" fill="none" stroke="#888" strokeWidth="2" /></Ico>
						<span>Stroke paint</span>
					</Tab>
					<Tab $w={84}>
						<Ico $s={11}><path d="M2 8h20M2 13h13M2 18h6M11 18h4M18 18h4" stroke="#666" strokeWidth="1.500" /></Ico>
						<span>Stroke style</span>
					</Tab>
				</Tabs>
				<Notebook>
					<PaintRow>
						<PaintCell><Ico $s={14}><path d="M4 4l16 16M20 4L4 20" stroke="#222" strokeWidth="3" /></Ico></PaintCell>
						{paints.map((n, i) => <PaintCell key={i}><Ico>{n}</Ico></PaintCell>)}
						<PaintCell><Ico $s={20}><path d="M5 8c0-5 4-7 8-7 5 0 8 3 8 6 0 4-4 4-5 7v1h-5v-2c0-4 5-4 5-7 0-3-5-3-6 1zM11 17h5v5h-5z" fill="#111" /><path d="M5 8c0-5 4-7 8-7 5 0 8 3 8 6 0 4-4 4-5 7v1h-5v-2c0-4 5-4 5-7 0-3-5-3-6 1z" fill="#777" opacity=".4" /></Ico></PaintCell>
						<PaintCell $ml={21} $w={15}><Ico $s={11}><path d="M3 3h6v10a3 3 0 0 0 6 0V3h6v10a9 9 0 0 1-18 0z" fill="#444" /></Ico></PaintCell>
						<PaintCell $ml={4} $w={15}><Ico $s={11}><path d="M12 22C5 17 1 12 2 3c3 0 7 0 10 3 3-3 7-3 10-3 1 9-3 14-10 19z" fill="#333" /></Ico></PaintCell>
					</PaintRow>
					<NoObjects>No objects</NoObjects>
				</Notebook>
				<SliderRow $mt={4}>
					<Slider><SliderPlain><span>Blur (%)</span><span>0.0</span></SliderPlain></Slider>
					<SliderSpin><SpinPart /><SpinPart $down /></SliderSpin>
				</SliderRow>
				<SliderRow $mt={4}>
					<Slider $on><SliderFill><span>Opacity (%)</span><span>100.0</span></SliderFill></Slider>
					<SliderSpin><SpinPart /><SpinPart $down /></SliderSpin>
				</SliderRow>
				<DockFill />
			</Dock>
			<SnapBar>
				{snaps.map((s, i) => {
					if (s === null) return <SnapSep key={i} />;
					const on = typeof s === 'object' && 'on' in (s as object);
					const node = on ? (s as { on: React.ReactNode }).on : (s as React.ReactNode);
					return <ToolButton key={i} $active={on}><Ico $s={22}>{node}</Ico></ToolButton>;
				})}
			</SnapBar>
		</Main>
		<HScroll><HThumb /></HScroll>
	</Page>
);

export default App;
